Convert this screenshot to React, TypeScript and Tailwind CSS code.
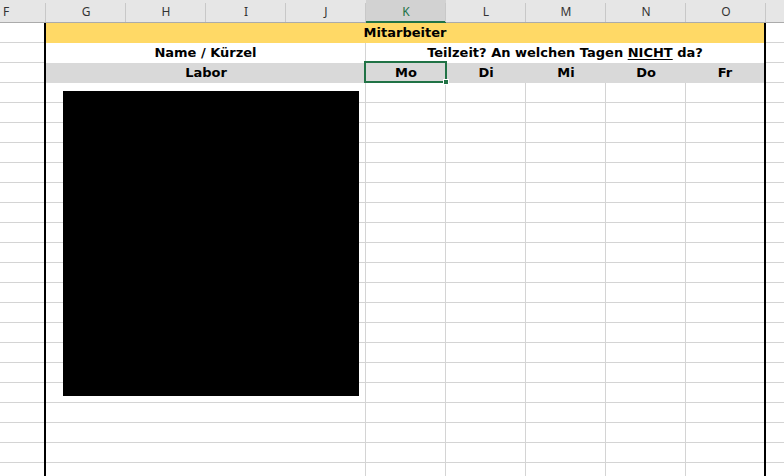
const grid = "border-[#d4d4d4]";
const cellText = "font-['DejaVu_Sans',sans-serif] text-[13px] font-bold text-black leading-5";
const sep =
  "relative after:absolute after:right-0 after:top-[3px] after:bottom-0 after:w-px after:bg-[#c8c8c8]";

const letters = ["G", "H", "I", "J", "K", "L", "M", "N", "O"];
const days = ["Mo", "Di", "Mi", "Do", "Fr"];

function ColumnHeader() {
  return (
    <div className="flex shrink-0 h-[23px] bg-[#e6e6e6] border-b border-[#ababab] font-['Noto_Sans',sans-serif] text-[12px] text-[#333]">
      <div className={`${sep} w-[46px] flex items-center pl-[3px] pt-[1px]`}>F</div>
      {letters.map((l) =>
        l === "K" ? (
          <div
            key={l}
            className={`${sep} w-[80px] flex items-center justify-center pt-[1px] bg-[#d2d2d2] text-[#217346] before:absolute before:left-0 before:right-0 before:bottom-[-1px] before:h-[2px] before:bg-[#217346]`}
          >
            {l}
          </div>
        ) : (
          <div key={l} className={`${sep} w-[80px] flex items-center justify-center pt-[1px]`}>
            {l}
          </div>
        )
      )}
      <div className="flex-1" />
    </div>
  );
}

function Edge() {
  return <div className="w-[2px] shrink-0 bg-black" />;
}

function EmptyRow() {
  return (
    <div className="flex h-5 shrink-0">
      <div className={`w-[44px] shrink-0 border-b ${grid}`} />
      <Edge />
      <div className={`w-[320px] shrink-0 border-r border-b ${grid}`} />
      {[0, 1, 2, 3].map((i) => (
        <div key={i} className={`w-[80px] shrink-0 border-r border-b ${grid}`} />
      ))}
      <div className={`w-[78px] shrink-0 border-b ${grid}`} />
      <Edge />
      <div className={`flex-1 border-b ${grid}`} />
    </div>
  );
}

export default function App() {
  return (
    <div className="relative w-[784px] h-[476px] overflow-hidden bg-white flex flex-col">
      <ColumnHeader />

      {/* Mitarbeiter */}
      <div className="flex h-5 shrink-0">
        <div className={`w-[44px] shrink-0 border-b ${grid}`} />
        <Edge />
        <div className={`w-[718px] shrink-0 bg-[#ffd966] text-center ${cellText}`}>Mitarbeiter</div>
        <Edge />
        <div className={`flex-1 border-b ${grid}`} />
      </div>

      {/* Name / Teilzeit */}
      <div className="flex h-5 shrink-0">
        <div className={`w-[44px] shrink-0 border-b ${grid}`} />
        <Edge />
        <div className={`w-[320px] shrink-0 border-r ${grid} text-center ${cellText}`}>Name / Kürzel</div>
        <div className={`w-[398px] shrink-0 text-center ${cellText}`}>
          Teilzeit? An welchen Tagen <span className="underline underline-offset-2">NICHT</span> da?
        </div>
        <Edge />
        <div className={`flex-1 border-b ${grid}`} />
      </div>

      {/* Labor / Tage */}
      <div className="flex h-5 shrink-0">
        <div className={`w-[44px] shrink-0 border-b ${grid}`} />
        <Edge />
        <div className={`w-[320px] shrink-0 bg-[#d9d9d9] text-center ${cellText}`}>Labor</div>
        {days.map((d, i) => (
          <div
            key={d}
            className={`${i === 4 ? "w-[78px]" : "w-[80px]"} shrink-0 bg-[#d9d9d9] text-center ${cellText}`}
          >
            {d}
          </div>
        ))}
        <Edge />
        <div className={`flex-1 border-b ${grid}`} />
      </div>

      {Array.from({ length: 20 }).map((_, i) => (
        <EmptyRow key={i} />
      ))}

      {/* placed picture */}
      <div className="absolute left-[63px] top-[91px] w-[296px] h-[305px] bg-black" />

      {/* active cell K3 */}
      <div className="absolute left-[364px] top-[61px] w-[83px] h-[22px] border-2 border-[#217346]" />
      <div className="absolute left-[443px] top-[79px] w-[6px] h-[6px] bg-[#217346] border border-white" />
    </div>
  );
}
